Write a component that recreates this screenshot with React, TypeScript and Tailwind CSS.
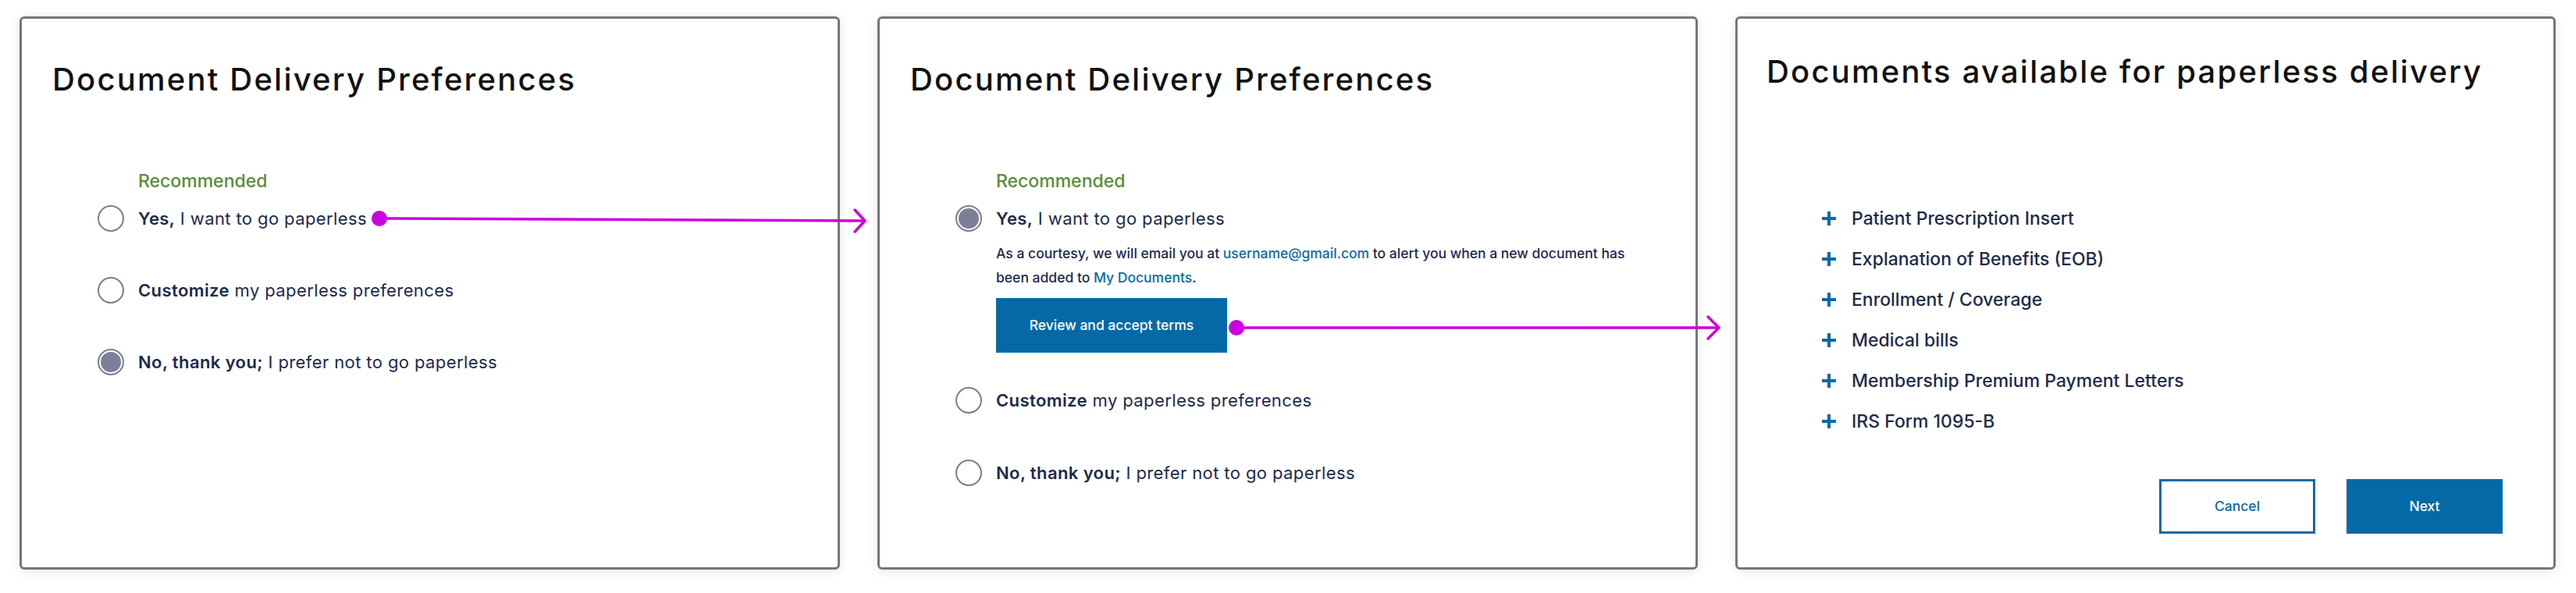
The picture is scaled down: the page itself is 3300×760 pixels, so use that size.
import React from "react";

const font = { fontFamily: "Inter, 'Noto Sans', sans-serif" };

function Card({ children }: { children: React.ReactNode }) {
  return (
    <div className="w-[1051px] h-[709px] shrink-0 bg-white border-[3px] border-[#767676] rounded-[6px] shadow-[0_2px_14px_rgba(0,0,0,0.10)]">
      {children}
    </div>
  );
}

function Radio({ checked }: { checked?: boolean }) {
  return (
    <span className="w-[34px] h-[34px] shrink-0 rounded-full border-2 border-[#7a7d94] flex items-center justify-center">
      {checked && <span className="w-[26px] h-[26px] rounded-full bg-[#7c7f97]" />}
    </span>
  );
}

function Option({ bold, rest, checked }: { bold: string; rest: string; checked?: boolean }) {
  return (
    <div className="flex items-center gap-[18px] h-[34px]">
      <Radio checked={checked} />
      <span className="text-[22px] text-[#1b2a4e] leading-[28px] tracking-[0.4px]">
        <span className="font-semibold">{bold}</span> {rest}
      </span>
    </div>
  );
}

function Heading({ children }: { children: React.ReactNode }) {
  return (
    <h1 className="text-[40px] leading-[48px] font-medium text-[#111] tracking-[2.2px]">{children}</h1>
  );
}

function Recommended() {
  return (
    <div className="ml-[52px] text-[23px] leading-[28px] font-medium text-[#5b8c37] mb-[17px]">Recommended</div>
  );
}

function FirstCard() {
  return (
    <Card>
      <div className="pl-[39px] pt-[54px]">
        <Heading>Document Delivery Preferences</Heading>
      </div>
      <div className="pl-[97px] mt-[92px] flex flex-col">
        <Recommended />
        <div className="flex flex-col gap-[58px]">
          <Option bold="Yes," rest="I want to go paperless" />
          <Option bold="Customize" rest="my paperless preferences" />
          <Option bold="No, thank you;" rest="I prefer not to go paperless" checked />
        </div>
      </div>
    </Card>
  );
}

function SecondCard() {
  return (
    <Card>
      <div className="pl-[39px] pt-[54px]">
        <Heading>Document Delivery Preferences</Heading>
      </div>
      <div className="pl-[97px] mt-[92px] flex flex-col">
        <Recommended />
        <Option bold="Yes," rest="I want to go paperless" checked />
        <p className="ml-[52px] mt-[12px] w-[815px] text-[17.5px] leading-[31px] font-medium text-[#1b2a4e]">
          As a courtesy, we will email you at <span className="text-[#0b6aa8]">username@gmail.com</span> to alert you
          when a new document has been added to <span className="text-[#0b6aa8]">My Documents</span>.
        </p>
        <button className="ml-[52px] mt-[11px] w-[296px] h-[70px] bg-[#036aa7] text-white text-[17.5px] font-medium">
          Review and accept terms
        </button>
        <div className="mt-[44px] flex flex-col gap-[59px]">
          <Option bold="Customize" rest="my paperless preferences" />
          <Option bold="No, thank you;" rest="I prefer not to go paperless" />
        </div>
      </div>
    </Card>
  );
}

const docs = [
  "Patient Prescription Insert",
  "Explanation of Benefits (EOB)",
  "Enrollment / Coverage",
  "Medical bills",
  "Membership Premium Payment Letters",
  "IRS Form 1095-B",
];

function ThirdCard() {
  return (
    <Card>
      <div className="h-full flex flex-col">
        <div className="pl-[37px] pt-[44px]">
          <Heading>Documents available for paperless delivery</Heading>
        </div>
        <ul className="pl-[108px] mt-[150px] flex flex-col gap-[24px]">
          {docs.map((d) => (
            <li key={d} className="flex items-center gap-[20px] h-[28px]">
              <svg width="18" height="18" viewBox="0 0 18 18" className="shrink-0">
                <path d="M9 0v18M0 9h18" stroke="#0b6aa8" strokeWidth="4" />
              </svg>
              <span className="text-[23px] leading-[28px] font-medium text-[#1b2a4e]">{d}</span>
            </li>
          ))}
        </ul>
        <div className="mt-auto mb-[43px] mr-[65px] flex justify-end gap-[40px]">
          <button className="w-[200px] h-[70px] border-[3px] border-[#0b6aa8] text-[#0b6aa8] text-[17.5px] font-medium bg-white">
            Cancel
          </button>
          <button className="w-[200px] h-[70px] bg-[#036aa7] text-white text-[17.5px] font-medium">Next</button>
        </div>
      </div>
    </Card>
  );
}

export default function App() {
  return (
    <div className="relative w-[3300px] h-[760px] bg-white" style={font}>
      <div className="flex gap-[48px] pl-[25px] pt-[21px]">
        <FirstCard />
        <SecondCard />
        <ThirdCard />
      </div>
      <svg className="absolute inset-0 pointer-events-none" width="3300" height="760">
        <g stroke="#cc00dd" strokeWidth="3.5" fill="none" strokeLinecap="round" strokeLinejoin="round">
          <path d="M486 280 L1108 283" />
          <path d="M1095 269 L1108 283 L1095 297" />
          <path d="M1584 420 L2202 420" />
          <path d="M2188 406 L2202 420 L2188 434" />
        </g>
        <circle cx="486" cy="280" r="10" fill="#cc00dd" />
        <circle cx="1584" cy="420" r="10" fill="#cc00dd" />
      </svg>
    </div>
  );
}
